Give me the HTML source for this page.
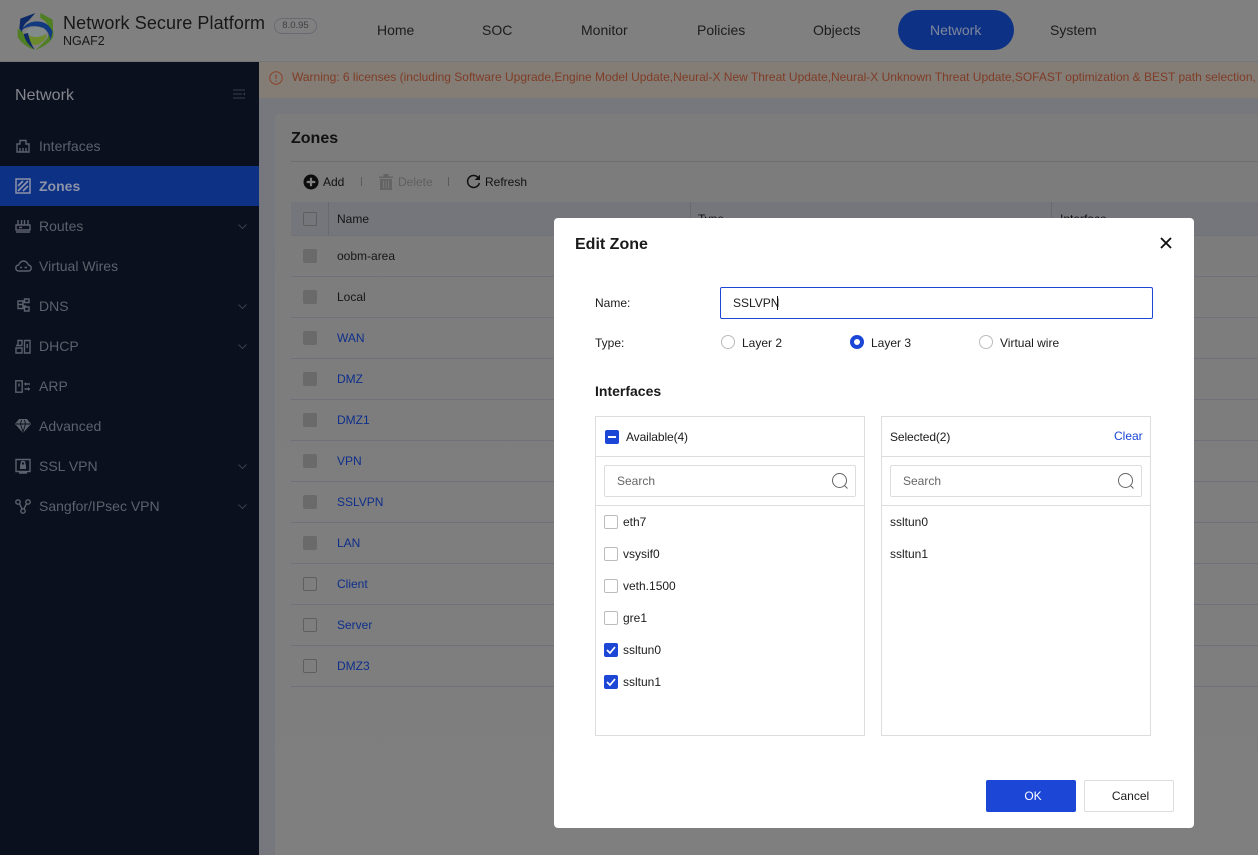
<!DOCTYPE html>
<html><head><meta charset="utf-8"><title>Edit Zone</title>
<style>
html,body{margin:0;padding:0;width:1258px;height:855px;overflow:hidden;background:#7f7f7f}
body{position:relative;font-family:"Liberation Sans",sans-serif;font-size:12px;color:#111}
.a,.t{position:absolute}
.t{white-space:nowrap;line-height:16px;height:16px}
svg{position:absolute;overflow:visible}
.nav{font-size:14px;color:#1c1c1c;line-height:18px;height:18px}
.side{font-size:14px;color:#5d616b;line-height:18px;height:18px}
.i{fill:none;stroke:#5d616b;stroke-width:1.4}
.chev{fill:none;stroke:#3c404b;stroke-width:1}
.hl{position:absolute;left:291px;width:967px;height:1px;background:#6f7079}
.cb{position:absolute;left:303px;width:12px;height:12px;border:1px solid #5f5f5f;border-radius:2px}
.cb.d{background:#6a6a6a;border-color:#6a6a6a}
.lk{color:#0e2f8b}
.nm{color:#161616}
.box{position:absolute;background:#fff;border:1px solid #ddd;box-sizing:border-box}
.ck{position:absolute;left:604px;width:12px;height:12px;border:1px solid #bdbdbd;border-radius:2px;background:#fff}
.ck.on{background:#1c46d6;border-color:#1c46d6}
.d{color:#1c1c1c}
</style></head>
<body>
<!-- header -->
<div class="a" style="left:0;top:0;width:1258px;height:62px;background:#808080;border-bottom:1px solid #75757a;box-sizing:border-box"></div>
<svg style="left:12px;top:8px" width="46" height="46" viewBox="0 0 138 138">
<path d="M85 15L122 35L124 85Q112 110 70 126Q95 105 108 88L112 60Q105 40 85 30Z" fill="#4f7f22"/>
<path d="M17 62L32 72Q40 100 68 126Q35 115 17 88Z" fill="#4f7f22"/>
<path d="M38 80Q70 70 105 82Q95 105 70 112Q48 105 38 80Z" fill="#6d8a2c"/>
<ellipse cx="72" cy="72" rx="30" ry="15" fill="#828b8c"/>
<path d="M70 15L25 32L22 62L30 72Q32 50 50 38Z" fill="#0e2a66"/>
<path d="M25 72Q40 42 72 40Q110 40 122 72L115 97Q112 72 95 60Q70 50 45 58Q32 62 25 72Z" fill="#123a80"/>
<path d="M48 75Q52 100 68 125Q40 105 35 78Z" fill="#0e2a66"/>
</svg>
<div class="t" style="left:63px;top:13px;font-size:18px;line-height:20px;height:20px;color:#171717;letter-spacing:.09px">Network Secure Platform</div>
<div class="t" style="left:63px;top:33px;font-size:12.5px;color:#171717">NGAF2</div>
<div class="a" style="left:274px;top:18px;width:41px;height:14px;border:1px solid #686a72;border-radius:8px;text-align:center;font-size:9.5px;line-height:14px;color:#3e3f45">8.0.95</div>
<div class="t nav" style="left:377px;top:21px">Home</div>
<div class="t nav" style="left:482px;top:21px">SOC</div>
<div class="t nav" style="left:581px;top:21px">Monitor</div>
<div class="t nav" style="left:697px;top:21px">Policies</div>
<div class="t nav" style="left:813px;top:21px">Objects</div>
<div class="a" style="left:898px;top:10px;width:116px;height:40px;border-radius:20px;background:#0d3185"></div>
<div class="t nav" style="left:930px;top:21px;color:#80889c">Network</div>
<div class="t nav" style="left:1050px;top:21px">System</div>

<!-- sidebar -->
<div class="a" style="left:0;top:62px;width:259px;height:793px;background:#0a101e"></div>
<div class="t" style="left:15px;top:87px;font-size:16px;line-height:18px;height:18px;color:#85878d;letter-spacing:.05px">Network</div>
<svg style="left:233px;top:89px" width="13" height="11" viewBox="0 0 13 11"><path d="M0 1H12M0 5H9M0 9H12" stroke="#3a3e49" stroke-width="1" fill="none"/><path d="M12 3.5V6.5L10 5Z" fill="#3a3e49"/></svg>
<div class="a" style="left:0;top:166px;width:259px;height:40px;background:#0d3185"></div>

<svg style="left:16px;top:139px" width="14" height="14" viewBox="0 0 14 14"><path class="i" d="M1 5H4V1.5H10V5H13V13H1Z"/><path class="i" d="M4 9V13M7 9V13M10 9V13"/></svg>
<div class="t side" style="left:39px;top:137px">Interfaces</div>

<svg style="left:15px;top:178px" width="16" height="16" viewBox="0 0 16 16"><rect x="1" y="1" width="14" height="14" fill="none" stroke="#8d93a8" stroke-width="1.5"/><path d="M3 8L8 3M3 13L13 3M8 13L13 8" stroke="#8d93a8" stroke-width="1.7" fill="none"/></svg>
<div class="t side" style="left:39px;top:177px;color:#8d93a8;font-weight:bold">Zones</div>

<svg style="left:15px;top:219px" width="16" height="14" viewBox="0 0 16 14"><path class="i" d="M1 6H15V11H1ZM3 6V1M6.5 6V1M9.5 6V1M13 6V1M1 13H15M4 8.5H7"/></svg>
<div class="t side" style="left:39px;top:217px">Routes</div>
<svg style="left:238px;top:224px" width="9" height="5"><path class="chev" d="M.5.5L4.5 4.5L8.5.5"/></svg>

<svg style="left:15px;top:260px" width="17" height="12" viewBox="0 0 17 12"><path class="i" d="M4 11Q.8 11 .8 8Q.8 5.5 3.5 5Q5.5 1 8.5 1Q11.5 1 13.5 5Q16.2 5.5 16.2 8Q16.2 11 13 11Z"/><path class="i" d="M5 7.5H7M9.5 7.5H12"/></svg>
<div class="t side" style="left:39px;top:257px">Virtual Wires</div>

<svg style="left:16px;top:298px" width="14" height="14" viewBox="0 0 14 14"><path class="i" d="M2 3H7V10.5H2ZM8.5 1H13V4.5H8.5ZM8.5 9H13V13H8.5ZM7 3H8.5M7 8H9.5V9M2 6.5H7"/></svg>
<div class="t side" style="left:39px;top:297px">DNS</div>
<svg style="left:238px;top:304px" width="9" height="5"><path class="chev" d="M.5.5L4.5 4.5L8.5.5"/></svg>

<svg style="left:15px;top:339px" width="16" height="15" viewBox="0 0 16 15"><path class="i" d="M3 6.5V1.5H7V6.5M1 6.5H7M1 9H7V14H1ZM9.5 1.5H15V14H9.5Z"/><path class="i" d="M12.2 5V9"/></svg>
<div class="t side" style="left:39px;top:337px">DHCP</div>
<svg style="left:238px;top:344px" width="9" height="5"><path class="chev" d="M.5.5L4.5 4.5L8.5.5"/></svg>

<svg style="left:15px;top:380px" width="15" height="13" viewBox="0 0 15 13"><path class="i" d="M.8 .8H7.2V12.2H.8ZM4 3.5V6.5M9.5 4H15M9.5 9H15"/><path d="M11 2V6L9 4ZM13 7V11L15 9Z" fill="#5d616b"/></svg>
<div class="t side" style="left:39px;top:377px">ARP</div>

<svg style="left:15px;top:419px" width="16" height="14" viewBox="0 0 16 14"><path d="M4 0H12L16 5L8 14L0 5Z" fill="#5d616b"/><path d="M1 5H15M5.5 5L8 13L10.5 5M5.5 5L6.5 1M10.5 5L9.5 1" stroke="#0a101e" fill="none" stroke-width=".9"/></svg>
<div class="t side" style="left:39px;top:417px">Advanced</div>

<svg style="left:15px;top:458px" width="16" height="16" viewBox="0 0 16 16"><path class="i" d="M1 1.5H15V13.5H1ZM4 15H12"/><path d="M5 6.5H11V11H5Z" fill="#5d616b"/><path class="i" d="M6.3 6.5V5Q6.3 3.5 8 3.5Q9.7 3.5 9.7 5V6.5"/></svg>
<div class="t side" style="left:39px;top:457px">SSL VPN</div>
<svg style="left:238px;top:464px" width="9" height="5"><path class="chev" d="M.5.5L4.5 4.5L8.5.5"/></svg>

<svg style="left:15px;top:499px" width="16" height="15" viewBox="0 0 16 15"><circle class="i" cx="3" cy="3" r="2.2"/><circle class="i" cx="13" cy="3" r="2.2"/><circle class="i" cx="8" cy="12" r="2.2"/><path class="i" d="M4.5 4.8L7 9.8M11.5 4.8L9 9.8"/></svg>
<div class="t side" style="left:39px;top:497px">Sangfor/IPsec VPN</div>
<svg style="left:238px;top:504px" width="9" height="5"><path class="chev" d="M.5.5L4.5 4.5L8.5.5"/></svg>

<!-- content -->
<div class="a" style="left:259px;top:62px;width:999px;height:793px;background:#76787d"></div>
<div class="a" style="left:259px;top:62px;width:999px;height:36px;background:#847d76"></div>
<svg style="left:269px;top:71px" width="14" height="14" viewBox="0 0 14 14"><circle cx="7" cy="7" r="6.2" fill="none" stroke="#8a4329" stroke-width="1"/><path d="M7 3.5V8M7 9.5V10.7" stroke="#8a4329" stroke-width="1.2" fill="none"/></svg>
<div class="t" style="left:292px;top:69px;color:#7f3c26;width:966px;overflow:hidden">Warning: 6 licenses (including Software Upgrade,Engine Model Update,Neural-X New Threat Update,Neural-X Unknown Threat Update,SOFAST optimization &amp; BEST path selection,</div>

<div class="a" style="left:275px;top:114px;width:983px;height:741px;background:linear-gradient(#7c7c7c,#7f7f7f);border-radius:4px 0 0 0"></div>
<div class="t" style="left:291px;top:130px;font-size:16px;font-weight:bold;line-height:18px;height:18px;color:#111">Zones</div>
<div class="hl" style="top:161px;background:#6e6e70"></div>

<svg style="left:303px;top:174px" width="16" height="16" viewBox="0 0 16 16"><circle cx="8" cy="8" r="7.5" fill="#0c0c0c"/><path d="M3.7 8H12.3M8 3.7V12.3" stroke="#7e7e7e" stroke-width="2.2"/></svg>
<div class="t d" style="left:323px;top:174px;color:#111">Add</div>
<div class="a" style="left:361px;top:177px;width:1px;height:9px;background:#5a5a5a"></div>
<svg style="left:379px;top:174px" width="14" height="16" viewBox="0 0 14 16"><path d="M0 2.5H14V4H0ZM4.5 1V0H9.5V1L9.5 2.5H4.5ZM1 5H13V16H1Z" fill="#646464"/><path d="M4.5 6.5V14.5M7 6.5V14.5M9.5 6.5V14.5" stroke="#7c7c7c" stroke-width=".8"/></svg>
<div class="t" style="left:398px;top:174px;color:#5f5f5f">Delete</div>
<div class="a" style="left:448px;top:177px;width:1px;height:9px;background:#5a5a5a"></div>
<svg style="left:466px;top:174px" width="15" height="15" viewBox="0 0 15 15"><path d="M12.2 3.6A6 6 0 1 0 13.4 9" fill="none" stroke="#111" stroke-width="1.5"/><path d="M14 .6V6H8.7Z" fill="#111"/></svg>
<div class="t d" style="left:485px;top:174px;color:#111">Refresh</div>

<div class="a" style="left:291px;top:202px;width:967px;height:33px;background:#75767b"></div>
<div class="a" style="left:328px;top:202px;width:1px;height:33px;background:#686a70"></div>
<div class="a" style="left:690px;top:202px;width:1px;height:33px;background:#686a70"></div>
<div class="a" style="left:1051px;top:202px;width:1px;height:33px;background:#686a70"></div>
<div class="cb" style="top:212px"></div>
<div class="t" style="left:337px;top:211px;color:#141414">Name</div>
<div class="t" style="left:698px;top:211px;color:#141414">Type</div>
<div class="t" style="left:1060px;top:211px;color:#141414">Interface</div>

<div class="hl" style="top:235px"></div><div class="hl" style="top:276px"></div><div class="hl" style="top:317px"></div><div class="hl" style="top:358px"></div><div class="hl" style="top:399px"></div><div class="hl" style="top:440px"></div><div class="hl" style="top:481px"></div><div class="hl" style="top:522px"></div><div class="hl" style="top:563px"></div><div class="hl" style="top:604px"></div><div class="hl" style="top:645px"></div><div class="hl" style="top:686px"></div>

<div class="cb d" style="top:249px"></div><div class="t nm" style="left:337px;top:248px">oobm-area</div>
<div class="cb d" style="top:290px"></div><div class="t nm" style="left:337px;top:289px">Local</div>
<div class="cb d" style="top:331px"></div><div class="t lk" style="left:337px;top:330px">WAN</div>
<div class="cb d" style="top:372px"></div><div class="t lk" style="left:337px;top:371px">DMZ</div>
<div class="cb d" style="top:413px"></div><div class="t lk" style="left:337px;top:412px">DMZ1</div>
<div class="cb d" style="top:454px"></div><div class="t lk" style="left:337px;top:453px">VPN</div>
<div class="cb d" style="top:495px"></div><div class="t lk" style="left:337px;top:494px">SSLVPN</div>
<div class="cb d" style="top:536px"></div><div class="t lk" style="left:337px;top:535px">LAN</div>
<div class="cb" style="top:577px"></div><div class="t lk" style="left:337px;top:576px">Client</div>
<div class="cb" style="top:618px"></div><div class="t lk" style="left:337px;top:617px">Server</div>
<div class="cb" style="top:659px"></div><div class="t lk" style="left:337px;top:658px">DMZ3</div>

<!-- dialog -->
<div class="a" style="left:554px;top:218px;width:640px;height:610px;background:#fff;border-radius:4px"></div>
<div class="t" style="left:575px;top:236px;font-size:16px;font-weight:bold;line-height:18px;height:18px;color:#1a1a1a">Edit Zone</div>
<svg style="left:1160px;top:237px" width="12" height="12" viewBox="0 0 12 12"><path d="M1 1L11 11M11 1L1 11" stroke="#111" stroke-width="1.9" fill="none"/></svg>

<div class="t d" style="left:595px;top:295px">Name:</div>
<div class="a" style="left:720px;top:287px;width:431px;height:30px;border:1px solid #1c46d6;border-radius:2px;background:#fff"></div>
<div class="t d" style="left:733px;top:295px">SSLVPN</div>
<div class="a" style="left:777px;top:296px;width:1px;height:14px;background:#111"></div>

<div class="t d" style="left:595px;top:335px">Type:</div>
<div class="a" style="left:721px;top:335px;width:12px;height:12px;border:1px solid #bbb;border-radius:50%"></div>
<div class="t d" style="left:742px;top:335px">Layer 2</div>
<div class="a" style="left:850px;top:335px;width:6px;height:6px;border:4px solid #1c46d6;border-radius:50%;background:#fff"></div>
<div class="t d" style="left:871px;top:335px">Layer 3</div>
<div class="a" style="left:979px;top:335px;width:12px;height:12px;border:1px solid #bbb;border-radius:50%"></div>
<div class="t d" style="left:1000px;top:335px">Virtual wire</div>

<div class="t" style="left:595px;top:383px;font-size:14px;font-weight:bold;color:#1a1a1a">Interfaces</div>

<!-- left panel -->
<div class="box" style="left:595px;top:416px;width:270px;height:320px"></div>
<div class="a" style="left:596px;top:456px;width:268px;height:1px;background:#ddd"></div>
<div class="a" style="left:596px;top:505px;width:268px;height:1px;background:#ddd"></div>
<div class="a" style="left:605px;top:430px;width:14px;height:14px;background:#1c46d6;border-radius:2px"></div>
<div class="a" style="left:608px;top:436px;width:8px;height:2px;background:#fff"></div>
<div class="t d" style="left:626px;top:429px;letter-spacing:-.1px">Available(4)</div>
<div class="box" style="left:604px;top:465px;width:252px;height:32px;border-radius:2px"></div>
<div class="t" style="left:617px;top:473px;color:#666">Search</div>
<svg style="left:832px;top:473px" width="17" height="17" viewBox="0 0 17 17"><circle cx="7.5" cy="7.5" r="7" fill="none" stroke="#666" stroke-width="1"/><path d="M12.5 12.5L15.5 15.5" stroke="#666" stroke-width="1"/></svg>

<div class="ck" style="top:515px"></div><div class="t d" style="left:623px;top:514px">eth7</div>
<div class="ck" style="top:547px"></div><div class="t d" style="left:623px;top:546px">vsysif0</div>
<div class="ck" style="top:579px"></div><div class="t d" style="left:623px;top:578px">veth.1500</div>
<div class="ck" style="top:611px"></div><div class="t d" style="left:623px;top:610px">gre1</div>
<div class="ck on" style="top:643px"></div><svg style="left:604px;top:643px" width="14" height="14" viewBox="0 0 14 14"><path d="M3 7L6 10L11 4" stroke="#fff" stroke-width="1.7" fill="none"/></svg><div class="t d" style="left:623px;top:642px">ssltun0</div>
<div class="ck on" style="top:675px"></div><svg style="left:604px;top:675px" width="14" height="14" viewBox="0 0 14 14"><path d="M3 7L6 10L11 4" stroke="#fff" stroke-width="1.7" fill="none"/></svg><div class="t d" style="left:623px;top:674px">ssltun1</div>

<!-- right panel -->
<div class="box" style="left:881px;top:416px;width:270px;height:320px"></div>
<div class="a" style="left:882px;top:456px;width:268px;height:1px;background:#ddd"></div>
<div class="a" style="left:882px;top:505px;width:268px;height:1px;background:#ddd"></div>
<div class="t d" style="left:890px;top:429px;letter-spacing:-.1px">Selected(2)</div>
<div class="t" style="left:1114px;top:428px;color:#1c46d6">Clear</div>
<div class="box" style="left:890px;top:465px;width:252px;height:32px;border-radius:2px"></div>
<div class="t" style="left:903px;top:473px;color:#666">Search</div>
<svg style="left:1118px;top:473px" width="17" height="17" viewBox="0 0 17 17"><circle cx="7.5" cy="7.5" r="7" fill="none" stroke="#666" stroke-width="1"/><path d="M12.5 12.5L15.5 15.5" stroke="#666" stroke-width="1"/></svg>
<div class="t d" style="left:890px;top:514px">ssltun0</div>
<div class="t d" style="left:890px;top:546px">ssltun1</div>

<!-- buttons -->
<div class="a" style="left:986px;top:780px;width:86px;padding-left:4px;height:32px;background:#1c46d6;border-radius:2px;color:#fff;text-align:center;line-height:33px">OK</div>
<div class="box" style="left:1084px;top:780px;width:90px;height:32px;padding-left:3px;border-radius:2px;text-align:center;line-height:31px;color:#1c1c1c">Cancel</div>
</body></html>
